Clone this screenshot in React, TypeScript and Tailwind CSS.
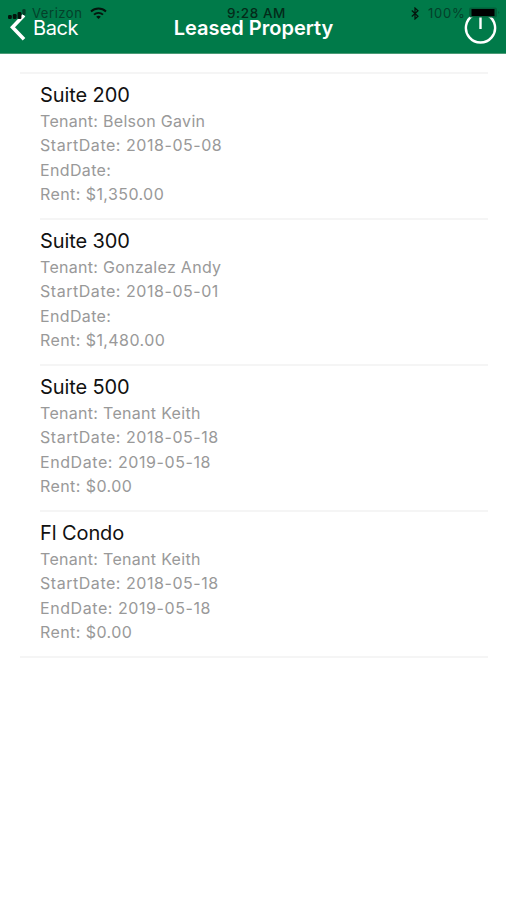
interface Lease {
  name: string;
  tenant: string;
  start: string;
  end: string;
  rent: string;
}

const leases: Lease[] = [
  { name: 'Suite 200', tenant: 'Belson Gavin', start: '2018-05-08', end: '', rent: '$1,350.00' },
  { name: 'Suite 300', tenant: 'Gonzalez Andy', start: '2018-05-01', end: '', rent: '$1,480.00' },
  { name: 'Suite 500', tenant: 'Tenant Keith', start: '2018-05-18', end: '2019-05-18', rent: '$0.00' },
  { name: 'Fl Condo', tenant: 'Tenant Keith', start: '2018-05-18', end: '2019-05-18', rent: '$0.00' },
];

function StatusBar() {
  return (
    <div className="absolute inset-x-0 top-0 grid h-[27px] grid-cols-3 items-center pl-[8px] pr-[6px] text-[13px] leading-none text-[#04402a]">
      <div className="flex items-center">
        <svg className="mt-[2px]" width="18" height="11" viewBox="0 0 18 11" fill="#04150d">
          <rect x="0" y="6" width="3.8" height="4" rx="1.2" />
          <rect x="4.8" y="5" width="3.8" height="5" rx="1.2" />
          <rect x="9.6" y="3" width="3.8" height="7" rx="1.2" />
          <rect x="14.4" y="0" width="3.2" height="6" rx="1.2" fill="#04402a" />
        </svg>
        <span className="ml-[6px] w-[51px] whitespace-nowrap tracking-[0.55px]">Verizon</span>
        <svg className="mb-[2px] ml-[7px]" width="17" height="12" viewBox="0 0 17 12" fill="none" stroke="#04150d" strokeWidth="1.9">
          <path d="M1 4.5a10.8 10.8 0 0 1 15 0" />
          <path d="M4 7.6a6.6 6.6 0 0 1 9 0" />
          <path d="M8.5 12 6.2 9.7a3.4 3.4 0 0 1 4.6 0Z" fill="#04150d" stroke="none" />
        </svg>
      </div>
      <div className="whitespace-nowrap pl-[5px] text-center text-[13.5px] font-medium tracking-[0.6px] text-[#042b19]">9:28 AM</div>
      <div className="flex items-center justify-end">
        <svg width="8" height="13" viewBox="0 0 8 13" fill="none" stroke="#04150d" strokeWidth="1.2">
          <path d="M.8 3.5 7 9.3 4 12V1l3 2.7L.8 9.5" />
        </svg>
        <span className="ml-[9px] w-[37px] whitespace-nowrap tracking-[0.8px]">100%</span>
        <svg className="mb-[2px] ml-[3px]" width="32" height="11" viewBox="0 0 32 11">
          <rect x="1" y="0.5" width="28" height="10" rx="2" fill="#02603a" />
          <rect x="3.5" y="2" width="23" height="7" fill="#000" />
          <path d="M30 4v3l1.5-1.5Z" fill="#02603a" />
        </svg>
      </div>
    </div>
  );
}

function NavBar() {
  return (
    <header className="relative h-[54px] border-b border-[#4b9b76] bg-[#007a49]">
      <div className="grid h-[54px] grid-cols-[1fr_auto_1fr] items-center pl-[10px] pr-[9px] pt-[1px] text-white">
        <button className="flex items-center gap-[7px] text-[20px] leading-none">
          <svg width="16" height="27" viewBox="0 0 16 27" fill="none" stroke="currentColor" strokeWidth="3.6">
            <path d="M14 1.2 2.5 13.2 14 25.2" />
          </svg>
          <span className="tracking-[-0.4px]">Back</span>
        </button>
        <h1 className="whitespace-nowrap text-[20px] font-semibold leading-none">Leased Property</h1>
        <button className="justify-self-end">
          <svg width="33" height="33" viewBox="0 0 33 33" fill="none" stroke="currentColor" strokeWidth="2.4">
            <path d="M9 4.4a14.6 14.6 0 1 0 15 0M16.5 4V18" />
          </svg>
        </button>
      </div>
      <StatusBar />
    </header>
  );
}

function LeaseCell({ lease }: { lease: Lease }) {
  return (
    <li className="ml-5 h-[146px] border-b-2 border-[#f5f5f5] pt-[7px] last:ml-0 last:pl-5">
      <h2 className="text-[20px] leading-[28px] tracking-[-0.1px] text-[#111]">{lease.name}</h2>
      <div className="text-[16px] leading-[24.4px] text-[#999]">
        <p className="tracking-[0.3px]">Tenant: {lease.tenant}</p>
        <p className="tracking-[0.54px]">StartDate: {lease.start}</p>
        <p className={lease.end ? 'tracking-[0.57px]' : 'tracking-[0.35px]'}>EndDate: {lease.end}</p>
        <p className="tracking-[0.42px]">Rent: {lease.rent}</p>
      </div>
    </li>
  );
}

export default function App() {
  return (
    <div className="min-h-[900px] w-full bg-white font-['Inter','Liberation_Sans',sans-serif]">
      <NavBar />
      <ul className="ml-5 mr-[18px] mt-[18px] border-t-2 border-[#f5f5f5]">
        {leases.map((lease) => (
          <LeaseCell key={lease.name} lease={lease} />
        ))}
      </ul>
    </div>
  );
}
